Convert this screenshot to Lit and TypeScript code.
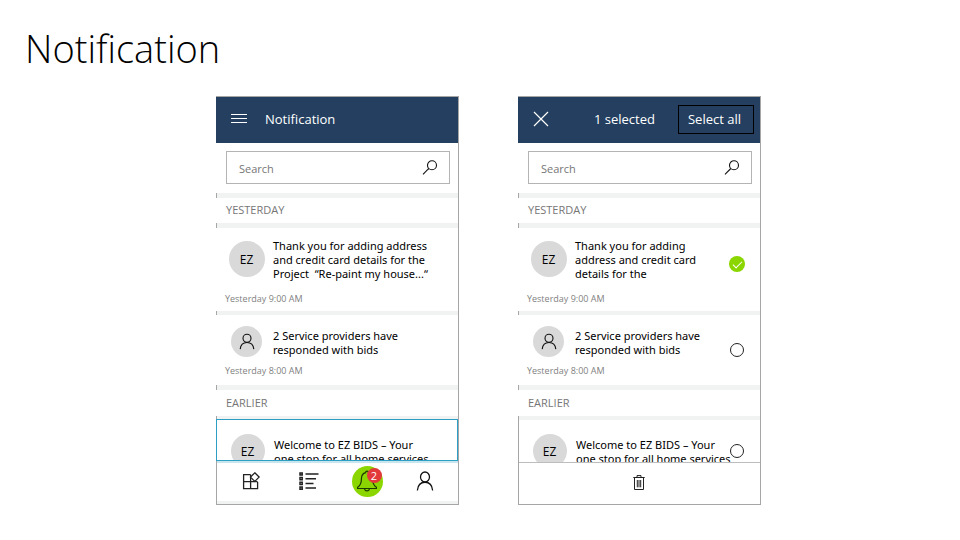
import { LitElement, html, svg, css, nothing } from "lit";
import { customElement, property } from "lit/decorators.js";
import { classMap } from "lit/directives/class-map.js";

interface Notice {
  avatar: "EZ" | "person";
  lines: string[];
  time?: string;
  kind: "long" | "short" | "peek";
  selected?: boolean;
}

const person = svg`<circle cx="10" cy="6" r="5"/><path d="M1.5 19.5C2 14.5 5 11.3 10 11.3s8 3.2 8.500 8.200"/>`;

const icons = {
  menu: html`<svg width="16" height="10" viewBox="0 0 16 10" stroke="#fff" fill="none"><path d="M0 .5h16M0 4.500h16M0 8.500h16"/></svg>`,
  close: html`<svg width="16" height="16" viewBox="0 0 16 16" stroke="#fff" stroke-width="1.2" fill="none"><path d="M1 1l14 14M15 1L1 15"/></svg>`,
  search: html`<svg width="16" height="16" viewBox="0 0 16 16" stroke="#111" stroke-width="1.1" fill="none"><circle cx="10" cy="5.300" r="4.500"/><path d="M6.800 8.500L1 14.300"/></svg>`,
  person: html`<svg width="18" height="20" viewBox="0 0 20 20" stroke="#111" stroke-width="1.4" fill="none" preserveAspectRatio="none">${person}</svg>`,
  personSmall: html`<svg width="16" height="17" viewBox="0 0 20 20" stroke="#111" stroke-width="1.4" fill="none">${person}</svg>`,
  apps: html`<svg width="18" height="18" viewBox="0 0 18 18" stroke="#222" stroke-width="1.3" fill="none"><path d="M8.500 2.600H1.600v14h14V10M1.600 9.600h14M8.600 2.600v14"/><path d="M12.800.8l4.300 4.300-4.300 4.300-4.300-4.300z" fill="#fff"/></svg>`,
  list: html`<svg width="20" height="18" viewBox="0 0 20 18" stroke="#222" stroke-width="1.500" fill="none"><path d="M1 .9h2.200v2.200H1zM1 5.600h2.200v2.200H1zM1 10.300h2.200v2.200H1zM1 15h2.200v2.200H1zM6.500 2H19.500M6.500 6.700h10.500M6.500 11.400h8M6.500 16.100h10.500"/></svg>`,
  bell: html`<svg width="20" height="22" viewBox="0 0 20 22" stroke="#1d3a00" stroke-width="1.200" fill="none"><path d="M10 1.200c-.9 0-1.400.6-1.400 1.500C5.400 3.500 4.400 6 4.400 9c0 4.300-1 6.400-3.800 8.300v1.200h18.800v-1.200C16.600 15.400 15.600 13.300 15.600 9c0-3-1-5.500-4.200-6.300 0-.9-.5-1.500-1.400-1.500z"/><path d="M7.500 18.500c.2 1.600 1.200 2.400 2.500 2.400s2.300-.8 2.500-2.400"/></svg>`,
  trash: html`<svg width="12" height="15" viewBox="0 0 12 15" stroke="#222" fill="none"><path d="M.3 2.500h11.400M4 2.500V.6h4v1.900M1.500 2.500v12h9v-12M4.300 5v7.300M6 5v7.300M7.700 5v7.300"/></svg>`,
};

@customElement("phone-screen")
class PhoneScreen extends LitElement {
  @property({ type: Boolean }) selecting = false;
  @property({ attribute: false }) recent: Notice[] = [];
  @property({ attribute: false }) earlier: Notice[] = [];

  static styles = css`
    :host { display: block; border: 1px solid #a6a6a6; border-left: 0; background: #fff; min-width: 0; }
    * { box-sizing: border-box; }
    button, input { font: inherit; color: inherit; margin: 0; }
    button { border: 0; background: none; padding: 0; cursor: pointer; display: grid; place-items: center; }
    svg { display: block; overflow: visible; }
    .bar { display: flex; align-items: center; height: 46px; background: #243f60; color: #fff; font-size: 13px; padding: 0 6px 2px 15px; }
    .bar h2 { font: inherit; margin: 0 0 0 18px; }
    .count { margin-left: auto; margin-right: 23px; }
    .all { border: 1px solid #000; height: 29px; padding: 0 12px 0 9px; }
    .search { display: flex; align-items: center; height: 33px; margin: 8px 8px 9px 10px; border: 1px solid #b4b4b4; padding: 0 11px 0 12px; }
    .search input { flex: 1; min-width: 0; border: 0; outline: 0; background: none; padding: 2px 0 0; font-size: 11px; }
    .search input::placeholder { color: #767676; opacity: 1; }
    .rule { height: 5px; background: #f1f2f2; border-left: 1px solid #a6a6a6; }
    .rule.thin { height: 4px; }
    .rule.slim { height: 3px; }
    .group { margin: 0; height: 25px; padding-left: 10px; font-size: 11px; font-weight: 400; line-height: 24px; color: #767676; }
    .group.low { height: 26px; line-height: 26px; }
    .item { display: grid; grid-template-columns: 37px minmax(0, 1fr) auto; grid-template-rows: auto 1fr; column-gap: 8px; padding: 11px 15px 0 12px; }
    .long { height: 83px; }
    .short { height: 70px; }
    .peek { height: 42px; padding-top: 14px; overflow: hidden; border-left: 1px solid #a6a6a6; }
    .focus { border: 1px solid #2e9fc4; padding-right: 27px; }
    .avatar { width: 36px; height: 36px; border-radius: 50%; background: #d9d9d9; display: grid; place-items: center; font-size: 12px; justify-self: center; margin-top: 2px; }
    .short .avatar { width: 31px; height: 31px; margin-top: 0; }
    .peek .avatar { width: 34px; height: 34px; margin-top: 0; }
    .text { margin: 0; font-family: "Noto Sans", "Open Sans", sans-serif; font-size: 11px; line-height: 14px; white-space: pre; }
    .short .text { padding-top: 3px; }
    .peek .text { padding-top: 4px; }
    .line { display: block; }
    .time { grid-column: 1 / -1; align-self: end; margin-left: -3px; padding-bottom: 6px; font-size: 9px; line-height: 12px; color: #7f7f7f; }
    .short .time { padding-bottom: 8px; }
    .check { appearance: none; width: 14px; height: 14px; border: 1px solid #222; border-radius: 50%; background: #fff; align-self: end; margin: 0 1px; }
    .long .check { width: 16px; height: 16px; margin: 0 0 9px; display: grid; place-items: center; }
    .peek .check { align-self: start; margin-top: 10px; background: none; }
    .check:checked { border: 0; background: #8bd600; }
    .check:checked::after { content: ""; width: 8px; height: 4px; border: solid #fff; border-width: 0 0 1px 1px; transform: translateY(-1px) rotate(-45deg); }
    .foot { border: solid #a6a6a6; border-width: 0 0 0 1px; }
    .tabs { display: grid; grid-template-columns: repeat(4, 1fr); height: 38px; padding: 0 4px 2px 5px; }
    .tabs.one { grid-template-columns: 1fr; height: 41px; padding: 0 2px 3px 0; }
    .edge { height: 3px; background: #f1f2f2; }
    .line-top { height: 2px; background: #c9e6ef; }
    .line-top.gray { height: 1px; background: #bdbdbd; }
    .alert { position: relative; width: 31px; height: 31px; border-radius: 50%; background: #8bd600; display: grid; place-items: center; }
    .badge { position: absolute; top: 2px; right: 1px; width: 15px; height: 15px; border-radius: 50%; background: #e23a3a; color: #fff; font-size: 11px; line-height: 15px; text-align: center; }
  `;

  private item(n: Notice) {
    const focus = n.kind === "peek" && !this.selecting;
    return html`<article class=${classMap({ item: true, [n.kind]: true, focus })}>
      <span class="avatar">${n.avatar === "EZ" ? "EZ" : icons.personSmall}</span>
      <p class="text">${n.lines.map((l) => html`<span class="line">${l}</span>`)}</p>
      ${this.selecting
        ? html`<input class="check" type="checkbox" aria-label=${n.lines[0]} .checked=${!!n.selected} />`
        : nothing}
      ${n.time ? html`<time class="time">${n.time}</time>` : nothing}
    </article>`;
  }

  render() {
    return html`
      <header class="bar">
        ${this.selecting
          ? html`<button aria-label="Close">${icons.close}</button>
              <span class="count">1 selected</span>
              <button class="all">Select all</button>`
          : html`<button aria-label="Menu">${icons.menu}</button>
              <h2>Notification</h2>`}
      </header>
      <label class="search">
        <input type="text" placeholder="Search" aria-label="Search" />${icons.search}
      </label>
      <div class="rule"></div>
      <h3 class="group">YESTERDAY</h3>
      <div class="rule"></div>
      ${this.item(this.recent[0])}
      <div class="rule thin"></div>
      ${this.item(this.recent[1])}
      <div class="rule"></div>
      <h3 class="group low">EARLIER</h3>
      <div class=${classMap({ rule: true, thin: this.selecting, slim: !this.selecting })}></div>
      ${this.earlier.map((n) => this.item(n))}
      <footer class="foot">
        <div class=${classMap({ "line-top": true, gray: this.selecting })}></div>
        ${this.selecting
          ? html`<div class="tabs one"><button aria-label="Delete">${icons.trash}</button></div>`
          : html`<nav class="tabs">
                <button aria-label="Apps">${icons.apps}</button>
                <button aria-label="List">${icons.list}</button>
                <button aria-label="Notifications">
                  <span class="alert">${icons.bell}<span class="badge">2</span></span>
                </button>
                <button aria-label="Profile">${icons.person}</button>
              </nav>
              <div class="edge"></div>`}
      </footer>
    `;
  }
}

@customElement("app-root")
class AppRoot extends LitElement {
  static styles = css`
    :host { display: block; min-height: 100vh; background: #fff; color: #000; font-family: "Open Sans", "Noto Sans", sans-serif; }
    .title { margin: 0; padding: 20px 25px 0; font-size: 38px; line-height: 56px; font-weight: 300; }
    .stage { display: grid; grid-template-columns: 1fr 1fr; column-gap: 59px; align-items: start; padding: 20px 199px 35px 216px; }
    @media (max-width: 900px) {
      .stage { grid-template-columns: repeat(auto-fit, minmax(243px, 1fr)); gap: 24px; padding: 20px 24px; }
    }
  `;

  private second: Notice = {
    avatar: "person",
    kind: "short",
    lines: ["2 Service providers have", "responded with bids"],
    time: "Yesterday 8:00 AM",
  };

  render() {
    const first = { avatar: "EZ", kind: "long", time: "Yesterday 9:00 AM" } as const;
    const welcome: Notice = {
      avatar: "EZ",
      kind: "peek",
      lines: ["Welcome to EZ BIDS – Your", "one stop for all home services"],
    };
    return html`
      <h1 class="title">Notification</h1>
      <main class="stage">
        <phone-screen
          .recent=${[
            { ...first, lines: ["Thank you for adding address", "and credit card details for the", "Project  “Re-paint my house...“"] },
            this.second,
          ]}
          .earlier=${[welcome]}
        ></phone-screen>
        <phone-screen
          selecting
          .recent=${[
            { ...first, selected: true, lines: ["Thank you for adding", "address and credit card", "details for the"] },
            this.second,
          ]}
          .earlier=${[welcome]}
        ></phone-screen>
      </main>
    `;
  }
}
